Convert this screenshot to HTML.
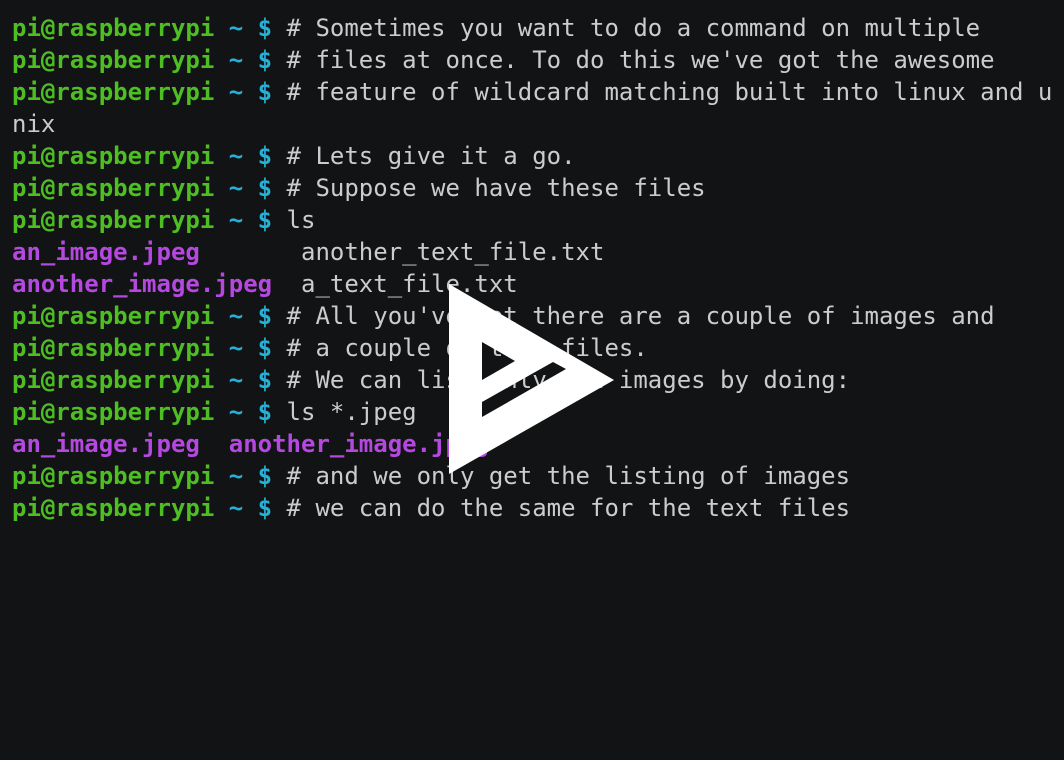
<!DOCTYPE html><html><head><style>
body{margin:0;width:1064px;height:760px;background:#121314;overflow:hidden;position:relative}
pre{margin:0;position:absolute;left:12px;top:12px;font-family:"DejaVu Sans Mono","Liberation Mono",monospace;font-size:24px;line-height:32px;color:#cccccc}
.g{color:#4ebf22;font-weight:bold}.c{color:#26b0d7;font-weight:bold}.m{color:#b548e0;font-weight:bold}
svg{position:absolute;left:0;top:0}
</style></head><body>
<pre><span class="g">pi@raspberrypi</span> <span class="c">~ $</span> # Sometimes you want to do a command on multiple
<span class="g">pi@raspberrypi</span> <span class="c">~ $</span> # files at once. To do this we've got the awesome
<span class="g">pi@raspberrypi</span> <span class="c">~ $</span> # feature of wildcard matching built into linux and u
nix
<span class="g">pi@raspberrypi</span> <span class="c">~ $</span> # Lets give it a go.
<span class="g">pi@raspberrypi</span> <span class="c">~ $</span> # Suppose we have these files
<span class="g">pi@raspberrypi</span> <span class="c">~ $</span> ls
<span class="m">an_image.jpeg</span>       another_text_file.txt
<span class="m">another_image.jpeg</span>  a_text_file.txt
<span class="g">pi@raspberrypi</span> <span class="c">~ $</span> # All you've got there are a couple of images and
<span class="g">pi@raspberrypi</span> <span class="c">~ $</span> # a couple of text files.
<span class="g">pi@raspberrypi</span> <span class="c">~ $</span> # We can list only the images by doing:
<span class="g">pi@raspberrypi</span> <span class="c">~ $</span> ls *.jpeg
<span class="m">an_image.jpeg</span>  <span class="m">another_image.jpeg</span>
<span class="g">pi@raspberrypi</span> <span class="c">~ $</span> # and we only get the listing of images
<span class="g">pi@raspberrypi</span> <span class="c">~ $</span> # we can do the same for the text files</pre>
<svg width="1064" height="760"><path fill="#fff" fill-rule="evenodd" d="M449 284L614 380L449 474Z M482 342L482 380L515 361Z M482 402L553 362L566 369L482 417Z"/></svg>
</body></html>
